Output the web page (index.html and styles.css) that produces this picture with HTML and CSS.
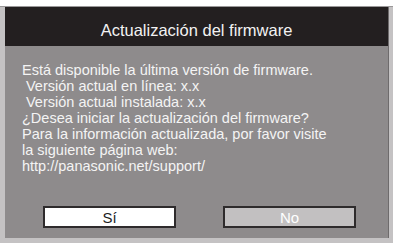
FILE: index.html
```html
<!DOCTYPE html>
<html lang="es">
<head>
<meta charset="utf-8">
<link rel="stylesheet" href="styles.css">
</head>
<body>
<div class="frame">
  <div class="dialog">
    <div class="header">Actualización del firmware</div>
    <div class="content">
      <p class="line">Está disponible la última versión de firmware.</p>
      <p class="line indent">Versión actual en línea: x.x</p>
      <p class="line indent">Versión actual instalada: x.x</p>
      <p class="line">¿Desea iniciar la actualización del firmware?</p>
      <p class="line">Para la información actualizada, por favor visite</p>
      <p class="line">la siguiente página web:</p>
      <p class="line">http://panasonic.net/support/</p>
    </div>
    <div class="buttons">
      <div class="btn btn-yes">Sí</div>
      <div class="btn btn-no">No</div>
    </div>
  </div>
</div>
</body>
</html>
```
FILE: styles.css
```css
html, body {
  margin: 0;
  padding: 0;
  background: #ffffff;
}
body {
  width: 393px;
  height: 243px;
  overflow: hidden;
  font-family: "Liberation Sans", Arial, sans-serif;
}
.frame {
  margin-top: 6px;
  height: 237px;
  background: #c4c2c3;
  border-top: 1px solid #9a9899;
  box-sizing: border-box;
  padding: 0 4px 5px 5px;
}
.dialog {
  height: 100%;
  background: #8e8b8c;
  display: flex;
  flex-direction: column;
  border-right: 1px solid #6e6b6c;
}
.header {
  height: 39px;
  background: #231f20;
  color: #f2f2f2;
  font-size: 16.5px;
  display: flex;
  align-items: center;
  justify-content: center;
  padding-top: 8px;
  box-sizing: border-box;
}
.content {
  padding: 16px 0 0 17px;
  color: #f4f4f4;
  font-size: 14.5px;
  line-height: 16px;
}
.line {
  margin: 0;
  white-space: nowrap;
}
.indent {
  padding-left: 4px;
}
.buttons {
  display: flex;
  gap: 47px;
  padding-left: 38px;
  margin-top: 32px;
}
.btn {
  width: 133px;
  height: 22px;
  box-sizing: border-box;
  border: 2px solid #2e2b2c;
  font-size: 15px;
  display: flex;
  align-items: center;
  justify-content: center;
}
.btn-yes {
  background: #ffffff;
  color: #1e1e1e;
}
.btn-no {
  background: #c2c0c1;
  color: #ffffff;
}
```
